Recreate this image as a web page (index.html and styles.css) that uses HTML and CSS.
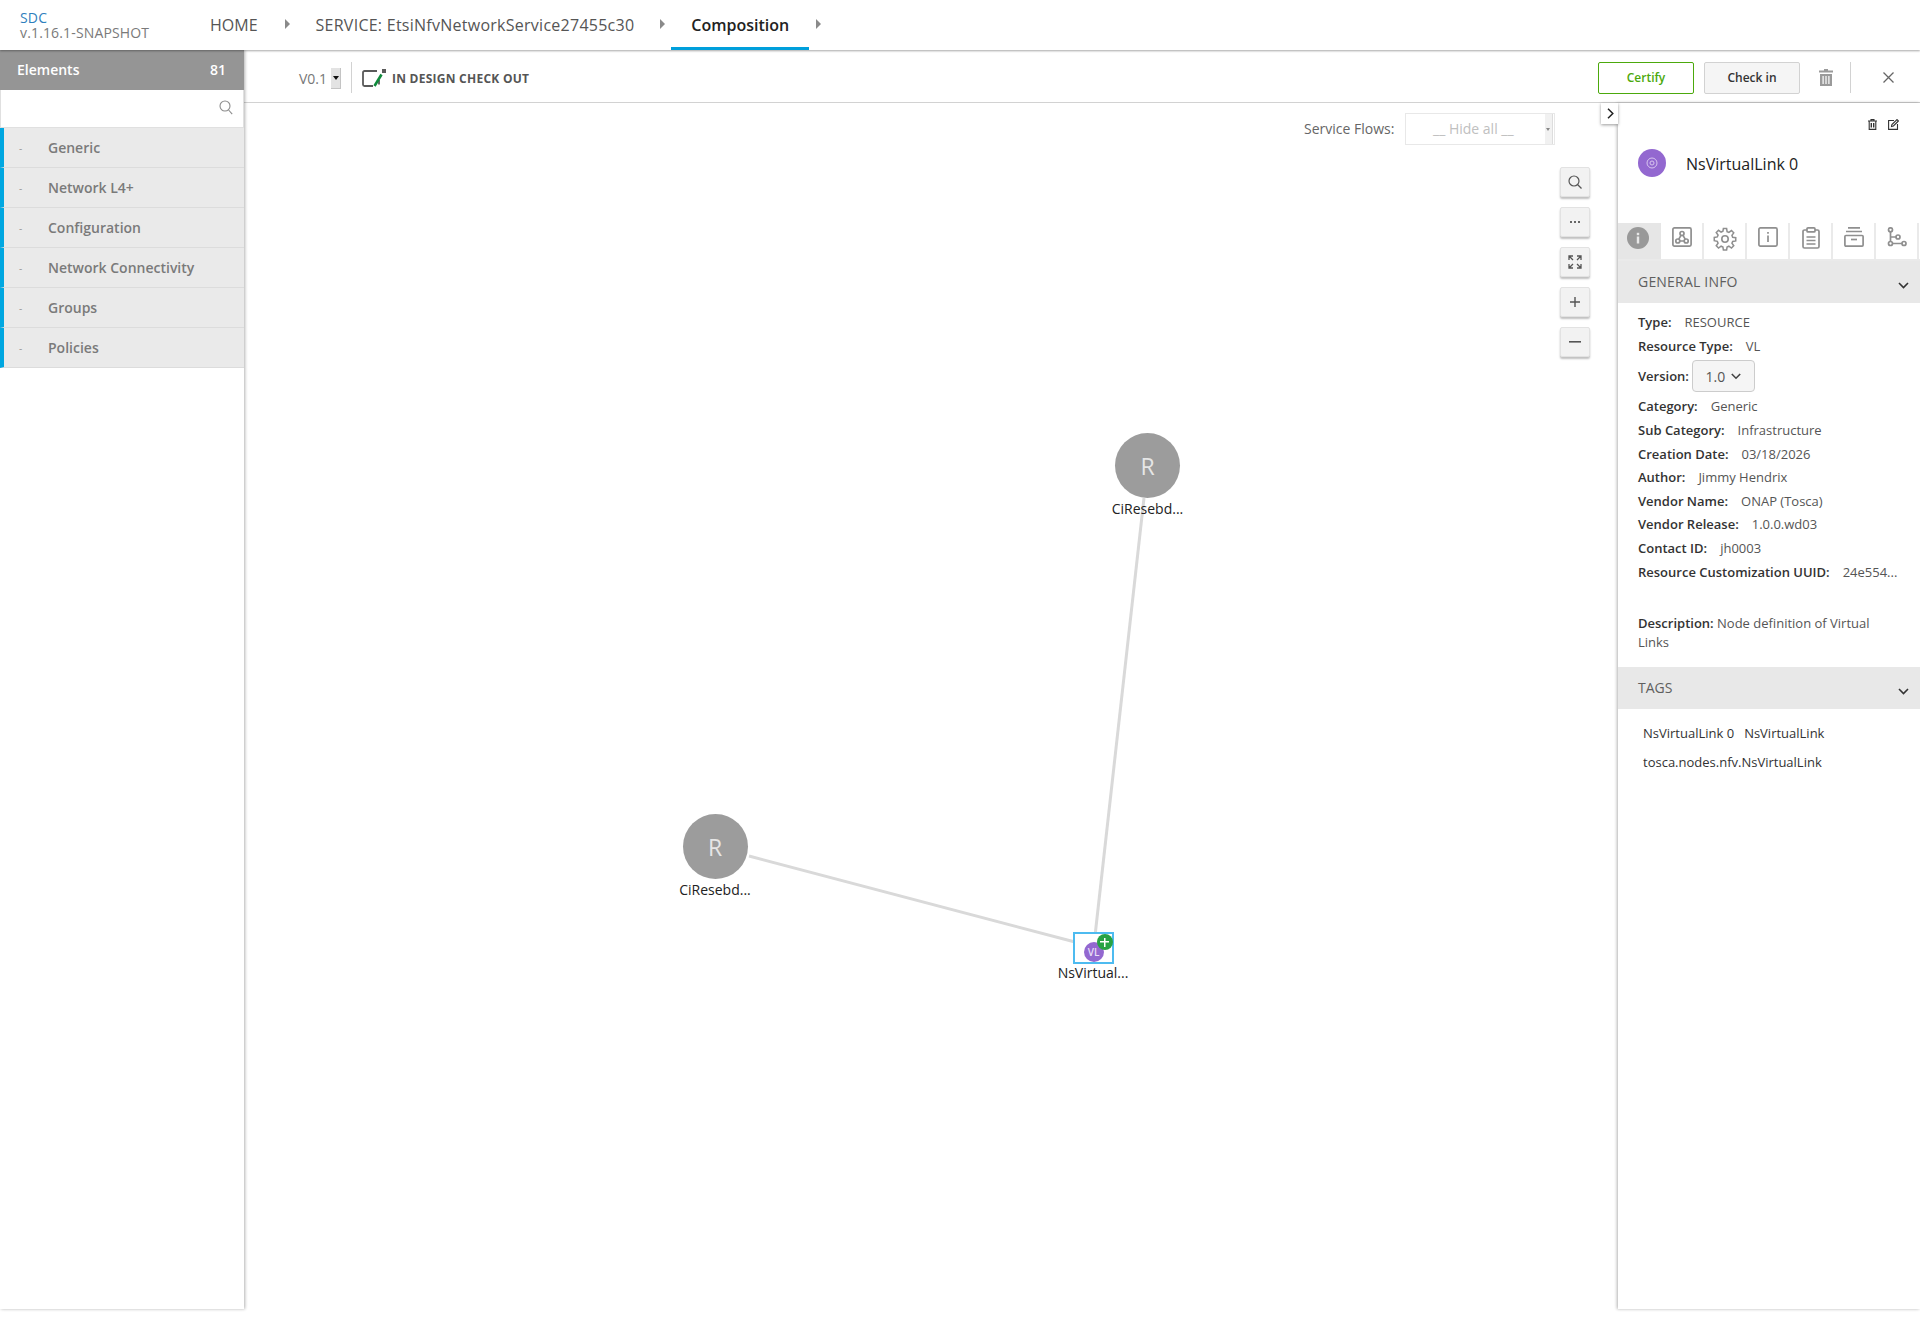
FILE: index.html
```html
<!DOCTYPE html>
<html lang="en">
<head>
  <meta charset="UTF-8">
  <title>SDC</title>
  <link rel="stylesheet" href="styles.css">
</head>
<body>
  <header class="top_nav">
    <div class="logo">
      <span class="logo_name">SDC</span>
      <span class="logo_version">v.1.16.1-SNAPSHOT</span>
    </div>
    <ul class="crumbs">
      <li class="crumb crumb_home">HOME</li>
      <li class="crumb_arrow"></li>
      <li class="crumb crumb_service">SERVICE: EtsiNfvNetworkService27455c30</li>
      <li class="crumb_arrow crumb_arrow_mid"></li>
      <li class="crumb crumb_active">Composition</li>
      <li class="crumb_arrow crumb_arrow_last"></li>
    </ul>
  </header>

  <div class="main">
    <aside class="palette">
      <div class="palette_head"><span>Elements</span><span>81</span></div>
      <div class="palette_search">
        <svg width="14" height="15" viewBox="0 0 14 15" fill="none" stroke="#8c8c8c" stroke-width="1.1"><circle cx="6" cy="6" r="5"/><path d="M9.6 10l3.6 4.2"/></svg>
      </div>
      <ul class="palette_list">
        <li><i>-</i>Generic</li>
        <li><i>-</i>Network L4+</li>
        <li><i>-</i>Configuration</li>
        <li><i>-</i>Network Connectivity</li>
        <li><i>-</i>Groups</li>
        <li><i>-</i>Policies</li>
      </ul>
    </aside>

    <div class="workspace">
      <div class="toolbar">
        <span class="version">V0.1</span>
        <span class="version_select"></span>
        <span class="toolbar_sep"></span>
        <svg class="status_icon" width="24" height="18" viewBox="0 0 24 18" fill="none">
          <path d="M15 2H2.500A1.500 1.500 0 0 0 1 3.500V15.500A1.500 1.500 0 0 0 2.500 17H11M17 11v4.500" stroke="#5a5a5a" stroke-width="1.800"/>
          <rect x="20" y="0" width="4" height="4" fill="#5a5a5a"/>
          <path d="M19.500 5.500L12.500 17" stroke="#0f8a3c" stroke-width="2.600"/>
        </svg>
        <span class="status_text">IN DESIGN CHECK OUT</span>
        <span class="toolbar_space"></span>
        <button type="button" class="btn btn_certify">Certify</button>
        <button type="button" class="btn btn_checkin">Check in</button>
        <svg class="trash_icon" width="14" height="17" viewBox="0 0 14 17" fill="#9a9a9a"><path d="M5 0h4v1.500h5V3.500H0V1.500h5z"/><path d="M1 5h12v12H1zM3.500 7v8h1.200V7zM6.400 7v8h1.200V7zM9.300 7v8h1.200V7z" fill-rule="evenodd"/></svg>
        <span class="toolbar_sep toolbar_sep_right"></span>
        <svg class="close_icon" width="11" height="11" viewBox="0 0 11 11" stroke="#666" stroke-width="1.300"><path d="M.5.500l10 10M10.500.500l-10 10"/></svg>
      </div>

      <div class="work_area">
        <div class="canvas">
          <svg class="links" width="1374" height="1207" viewBox="0 0 1374 1207" fill="none" stroke="#d9d9d9" stroke-width="3">
            <line x1="900" y1="395" x2="851" y2="833"/>
            <line x1="505" y1="753" x2="831" y2="839"/>
          </svg>

          <div class="flows">
            <span class="flows_label">Service Flows:</span>
            <div class="flows_select"><span>__ Hide all __</span><i></i></div>
          </div>

          <div class="zoom_tools">
            <button type="button" class="tool"><svg width="14" height="14" viewBox="0 0 14 14" fill="none" stroke="#555" stroke-width="1.200"><circle cx="6" cy="6" r="5"/><path d="M9.500 9.500L13.500 13.500"/></svg></button>
            <button type="button" class="tool"><svg width="10" height="2" viewBox="0 0 10 2" fill="#666"><rect width="2" height="2"/><rect x="4" width="2" height="2"/><rect x="8" width="2" height="2"/></svg></button>
            <button type="button" class="tool"><svg width="14" height="14" viewBox="0 0 14 14" fill="none" stroke="#555" stroke-width="1.300"><path d="M1 5V1h4M9 1h4v4M13 9v4H9M5 13H1V9M1.500 1.500L5 5M12.500 1.500L9 5M12.500 12.500L9 9M1.500 12.500L5 9"/></svg></button>
            <button type="button" class="tool"><svg width="12" height="12" viewBox="0 0 12 12" stroke="#555" stroke-width="1.400"><path d="M6 1v10M1 6h10"/></svg></button>
            <button type="button" class="tool"><svg width="12" height="2" viewBox="0 0 12 2" fill="#555"><rect width="12" height="1.600"/></svg></button>
          </div>

          <div class="node node_top">
            <div class="node_circle">R</div>
            <div class="node_label">CiResebd...</div>
          </div>
          <div class="node node_left">
            <div class="node_circle">R</div>
            <div class="node_label">CiResebd...</div>
          </div>
          <div class="node node_vl">
            <div class="vl_box">
              <span class="vl_circle">VL</span>
              <span class="vl_plus"></span>
            </div>
            <div class="node_label">NsVirtual...</div>
          </div>
        </div>

        <section class="panel">
          <button type="button" class="panel_toggle"><svg width="7" height="11" viewBox="0 0 7 11" fill="none" stroke="#222" stroke-width="1.500"><path d="M1 .700l4.800 4.800L1 10.300"/></svg></button>
          <div class="panel_actions">
            <svg width="9" height="11" viewBox="0 0 9 11" fill="none" stroke="#333" stroke-width="1.100"><path d="M0 2h9M3 2V.600h3V2M1.200 2v8.400h6.600V2"/><path d="M3.300 4v4.500M5.700 4v4.500" stroke-width="1.400"/></svg>
            <svg width="11" height="11" viewBox="0 0 11 11" fill="none" stroke="#333" stroke-width="1.100"><path d="M6 1.500H.600v8.900h8.900V5"/><path d="M3.500 7.500l.4-2L9 .600l1.400 1.400-5 5z"/></svg>
          </div>
          <div class="panel_title">
            <span class="avatar"><svg width="12" height="12" viewBox="0 0 12 12" fill="none" stroke="#d9c6ef" stroke-width="1"><circle cx="6" cy="6" r="5"/><circle cx="6" cy="6" r="2"/></svg></span>
            <span class="panel_name">NsVirtualLink 0</span>
          </div>

          <ul class="panel_tabs">
            <li class="tab_on"><svg width="22" height="22" viewBox="0 0 22 22"><circle cx="11" cy="11" r="11" fill="#999"/><rect x="9.800" y="9.500" width="2.400" height="7" fill="#e8e8e8"/><rect x="9.800" y="5.800" width="2.400" height="2.400" fill="#e8e8e8"/></svg></li>
            <li><svg width="20" height="20" viewBox="0 0 20 20" fill="none" stroke="#8f8f8f" stroke-width="1.700"><rect x=".9" y=".9" width="18.200" height="18.200" rx="1.500"/><circle cx="10" cy="6.500" r="2"/><circle cx="5.800" cy="14" r="2"/><circle cx="14.200" cy="14" r="2"/><path d="M9 8.300l-2.200 3.900M11 8.300l2.200 3.900M7.800 14h4.400"/></svg></li>
            <li><svg width="24" height="24" viewBox="0 0 24 24" fill="none" stroke="#8f8f8f" stroke-width="1.600"><circle cx="12" cy="12" r="3.200"/><path d="M10.300 1h3.400l.5 3.200 1.900.8 2.700-1.900 2.400 2.400-1.900 2.700.8 1.900 3.200.5v3.400l-3.200.5-.8 1.900 1.900 2.700-2.400 2.400-2.700-1.900-1.900.8-.5 3.200h-3.400l-.5-3.200-1.900-.8-2.700 1.900-2.400-2.400 1.900-2.700-.8-1.900L.7 13.700v-3.400l3.200-.5.800-1.900-1.900-2.700 2.400-2.400 2.700 1.900 1.900-.8z" transform="translate(.600 .600) scale(.95)"/></svg></li>
            <li><svg width="20" height="20" viewBox="0 0 20 20" fill="none" stroke="#8f8f8f" stroke-width="1.700"><rect x=".9" y=".9" width="18.200" height="18.200" rx="1.500"/><path d="M10 8.500v6.500M10 5v1.800"/></svg></li>
            <li><svg width="18" height="22" viewBox="0 0 18 22" fill="none" stroke="#8f8f8f" stroke-width="1.700"><path d="M5 3H2.500A1.500 1.500 0 0 0 1 4.500V19.500A1.500 1.500 0 0 0 2.500 21h13a1.500 1.500 0 0 0 1.500-1.500V4.500A1.500 1.500 0 0 0 15.500 3H13"/><rect x="5" y=".9" width="8" height="4" rx="1"/><path d="M4.500 10h9M4.500 13.500h9M4.500 17h9"/></svg></li>
            <li><svg width="20" height="20" viewBox="0 0 20 20" fill="none" stroke="#8f8f8f" stroke-width="1.700"><path d="M4 .9h12M2 4.500h16"/><rect x=".9" y="8.500" width="18.200" height="10.600" rx="1"/><path d="M7 12.500h6"/></svg></li>
            <li class="tab_last"><svg width="20" height="20" viewBox="0 0 20 20" fill="none" stroke="#8f8f8f" stroke-width="1.700"><circle cx="3.500" cy="2.800" r="2"/><circle cx="3.500" cy="16.500" r="2"/><circle cx="11" cy="10" r="2"/><circle cx="17" cy="16.500" r="2"/><path d="M3.500 4.800v9.700M5.500 16.500h9.500M3.500 10H9"/></svg></li>
          </ul>

          <h3 class="section_head"><span>GENERAL INFO</span><svg width="11" height="7" viewBox="0 0 11 7" fill="none" stroke="#333" stroke-width="1.600"><path d="M1 1l4.500 4.500L10 1"/></svg></h3>
          <div class="info">
            <p class="info_top"><b>Type:</b>RESOURCE</p>
            <p class="info_top"><b>Resource Type:</b>VL</p>
            <p class="info_version"><b>Version:</b><span class="version_btn">1.0<svg width="10" height="7" viewBox="0 0 10 7" fill="none" stroke="#444" stroke-width="1.600"><path d="M.8 1l4.200 4.200L9.200 1"/></svg></span></p>
            <p><b>Category:</b>Generic</p>
            <p><b>Sub Category:</b>Infrastructure</p>
            <p><b>Creation Date:</b>03/18/2026</p>
            <p><b>Author:</b>Jimmy Hendrix</p>
            <p><b>Vendor Name:</b>ONAP (Tosca)</p>
            <p><b>Vendor Release:</b>1.0.0.wd03</p>
            <p><b>Contact ID:</b>jh0003</p>
            <p><b>Resource Customization UUID:</b>24e554...</p>
          </div>
          <p class="description"><b>Description:</b> Node definition of Virtual Links</p>

          <h3 class="section_head section_tags"><span>TAGS</span><svg width="11" height="7" viewBox="0 0 11 7" fill="none" stroke="#333" stroke-width="1.600"><path d="M1 1l4.500 4.500L10 1"/></svg></h3>
          <div class="tags">
            <div class="tag_row"><span>NsVirtualLink 0</span><span>NsVirtualLink</span></div>
            <div class="tag_row"><span>tosca.nodes.nfv.NsVirtualLink</span></div>
          </div>
        </section>
      </div>
    </div>
  </div>
</body>
</html>
```

FILE: styles.css
```css
*{
  margin: 0;
  padding: 0;
  box-sizing: border-box;
}
html, body{
  height: 100%;
  background-color: white;
}
body{
  font-family: "Open Sans", sans-serif;
  font-size: 13px;
  color: #5a5a5a;
  overflow: hidden;
}
ul{
  list-style-type: none;
}
button{
  font-family: inherit;
}

/* top nav */
.top_nav{
  height: 50px;
  display: flex;
  position: relative;
  z-index: 3;
  background-color: white;
  box-shadow: 0px 1px 2px rgba(0, 0, 0, 0.35);
}
.logo{
  width: 210px;
  padding: 10px 0 0 20px;
  display: flex;
  flex-direction: column;
  font-size: 14px;
  line-height: 15px;
  letter-spacing: 0.15px;
}
.logo_name{
  color: #2f7fbd;
}
.logo_version{
  color: #7a7a7a;
}
.crumbs{
  display: flex;
  align-items: stretch;
}
.crumb{
  font-size: 16px;
  line-height: 50px;
  font-weight: 500;
  color: #555;
}
.crumb_service{
  margin-left: 26px;
  letter-spacing: 0.26px;
}
.crumb_active{
  margin-left: 6px;
  padding: 0 20px;
  color: #222;
  font-weight: 600;
  height: 50px;
  border-bottom: 3px solid #009fdb;
}
.crumb_arrow{
  width: 0;
  height: 0;
  margin: 19px 0 0 27px;
  border-left: 5px solid #8a8a8a;
  border-top: 5px solid transparent;
  border-bottom: 5px solid transparent;
}
.crumb_arrow_mid{
  margin-left: 26px;
}
.crumb_arrow_last{
  margin-left: 7px;
}

.main{
  display: flex;
  height: 1259px;
}

/* left palette */
.palette{
  width: 244px;
  flex-shrink: 0;
  position: relative;
  z-index: 2;
  background-color: white;
  box-shadow: 1px 0px 3px rgba(0, 0, 0, 0.3);
}
.palette_head{
  height: 40px;
  padding: 0 18px 2px 17px;
  display: flex;
  justify-content: space-between;
  align-items: center;
  background-color: #959595;
  color: white;
  font-size: 14px;
  font-weight: 600;
}
.palette_search{
  height: 38px;
  display: flex;
  justify-content: flex-end;
  align-items: center;
  padding: 0 10px 2px 0;
  border: 1px solid #e0e0e0;
  border-top: none;
}
.palette_list li{
  height: 40px;
  padding-left: 44px;
  position: relative;
  display: flex;
  align-items: center;
  background-color: #eaeaea;
  border-left: 4px solid #00a7e1;
  border-bottom: 1px solid #dcdcdc;
  font-size: 14px;
  font-weight: 600;
  color: #7a7a7a;
}
.palette_list li i{
  position: absolute;
  left: 15px;
  font-style: normal;
  font-size: 10px;
  font-weight: 400;
  color: #999;
}

/* toolbar */
.workspace{
  flex: 1;
  display: flex;
  flex-direction: column;
  min-width: 0;
}
.toolbar{
  height: 53px;
  flex-shrink: 0;
  padding: 3px 0 0 55px;
  display: flex;
  align-items: center;
  border-bottom: 1px solid #d2d2d2;
}
.version{
  margin-top: 2px;
  font-size: 14px;
  color: #777;
  width: 32px;
}
.version_select{
  width: 10px;
  height: 21px;
  margin-top: 1px;
  position: relative;
  background-color: #e3e3e3;
  border: 1px solid #c4c4c4;
  border-width: 0 1px 1px 0;
}
.version_select::after{
  content: "";
  position: absolute;
  top: 8px;
  left: 2px;
  border-top: 4px solid #111;
  border-left: 3px solid transparent;
  border-right: 3px solid transparent;
}
.toolbar_sep{
  width: 1px;
  height: 31px;
  margin-left: 10px;
  background-color: #d2d2d2;
}
.status_icon{
  margin: 0 6px 0 10px;
}
.status_text{
  margin-top: 2px;
  font-size: 12px;
  font-weight: 700;
  letter-spacing: 0.25px;
  color: #555;
}
.toolbar_space{
  flex: 1;
}
.btn{
  width: 96px;
  height: 32px;
  font-size: 12px;
  font-weight: 600;
  border-radius: 2px;
  background-color: white;
}
.btn_certify{
  border: 1px solid #4ca90c;
  color: #4ca90c;
}
.btn_checkin{
  margin-left: 10px;
  border: 1px solid #d2d2d2;
  background-color: #f5f5f5;
  color: #333;
}
.trash_icon{
  margin-left: 19px;
}
.toolbar_sep_right{
  margin-left: 17px;
}
.close_icon{
  margin: 0 26px 0 32px;
}

/* canvas */
.work_area{
  flex: 1;
  display: flex;
  min-height: 0;
}
.canvas{
  flex: 1;
  position: relative;
}
.links{
  position: absolute;
  top: 0;
  left: 0;
}
.flows{
  position: absolute;
  top: 10px;
  left: 1060px;
  display: flex;
  align-items: center;
}
.flows_label{
  width: 101px;
  padding-bottom: 2px;
  font-size: 14px;
  color: #666;
}
.flows_select{
  width: 150px;
  height: 32px;
  position: relative;
  display: flex;
  align-items: center;
  padding: 0 0 2px 27px;
  border: 1px solid #e8e8e8;
  font-size: 14px;
  color: #c0c0c0;
}
.flows_select i{
  position: absolute;
  top: 0;
  right: 1px;
  width: 8px;
  height: 30px;
  background-color: #f1f1f1;
  border-right: 1px solid #ddd;
}
.flows_select i::after{
  content: "";
  position: absolute;
  top: 14px;
  left: 1px;
  border-top: 3px solid #888;
  border-left: 2.500px solid transparent;
  border-right: 2.500px solid transparent;
}
.zoom_tools{
  position: absolute;
  top: 64px;
  left: 1316px;
  display: flex;
  flex-direction: column;
  gap: 10px;
}
.tool{
  width: 30px;
  height: 30px;
  display: flex;
  justify-content: center;
  align-items: center;
  background-color: #f2f2f2;
  border: 1px solid #e2e2e2;
  border-radius: 2px;
  box-shadow: 0px 2px 2px rgba(0, 0, 0, 0.25);
}

/* nodes sit on a free canvas */
.node{
  position: absolute;
  width: 90px;
  display: flex;
  flex-direction: column;
  align-items: center;
}
.node_top{
  left: 858.500px;
  top: 330px;
}
.node_left{
  left: 426px;
  top: 711px;
}
.node_vl{
  left: 804px;
  top: 829px;
}
.node_circle{
  width: 65px;
  height: 65px;
  border-radius: 50%;
  display: flex;
  justify-content: center;
  align-items: center;
  background-color: #9c9c9c;
  color: #e6e6e6;
  font-size: 23px;
}
.node_label{
  margin-top: 2px;
  font-size: 14px;
  line-height: 18px;
  color: #222;
  white-space: nowrap;
}
.node_vl .node_label{
  margin-top: 0;
}
.vl_box{
  width: 41px;
  height: 32px;
  position: relative;
  background-color: white;
  border: 2px solid #4dbbf0;
}
.vl_circle{
  position: absolute;
  left: 9px;
  top: 8px;
  width: 20px;
  height: 20px;
  border-radius: 50%;
  display: flex;
  justify-content: center;
  align-items: center;
  background-color: #9368d0;
  color: #e9def7;
  font-size: 10px;
  font-weight: 600;
}
.vl_plus{
  position: absolute;
  left: 22px;
  top: 0px;
  width: 16px;
  height: 16px;
  border-radius: 50%;
  background:
    linear-gradient(white, white) center / 9px 1.500px no-repeat,
    linear-gradient(white, white) center / 1.500px 9px no-repeat,
    #27a243;
}

/* right panel */
.panel{
  width: 302px;
  flex-shrink: 0;
  position: relative;
  background-color: white;
  box-shadow: -1px 0px 3px rgba(0, 0, 0, 0.3);
}
.panel_toggle{
  position: absolute;
  top: 0;
  left: -17px;
  width: 17px;
  height: 21px;
  display: flex;
  justify-content: center;
  align-items: center;
  padding-left: 2px;
  background-color: white;
  border: none;
  box-shadow: 0px 1px 3px rgba(0, 0, 0, 0.4);
}
.panel_actions{
  height: 46px;
  padding: 16px 21px 0 0;
  display: flex;
  justify-content: flex-end;
  gap: 11px;
}
.panel_title{
  height: 74px;
  padding-left: 20px;
  display: flex;
  gap: 20px;
}
.avatar{
  width: 28px;
  height: 28px;
  border-radius: 50%;
  display: flex;
  justify-content: center;
  align-items: center;
  background-color: #9368d0;
}
.panel_name{
  font-size: 16px;
  line-height: 30px;
  color: #222;
}
.panel_tabs{
  height: 38px;
  display: flex;
  border-bottom: 2px solid #eaeaea;
}
.panel_tabs li{
  width: 43px;
  height: 36px;
  display: flex;
  justify-content: center;
  padding-top: 4px;
  border-right: 2px solid #eaeaea;
}
.panel_tabs li.tab_on{
  background-color: #e6e6e6;
  border-right: none;
  padding-right: 3px;
}
.section_head{
  height: 42px;
  padding: 0 11px 0 20px;
  display: flex;
  justify-content: space-between;
  align-items: center;
  background-color: #e8e8e8;
  font-size: 14px;
  font-weight: 500;
  letter-spacing: 0.2px;
  color: #5f5f5f;
}
.section_head span{
  margin-bottom: 2px;
}
.section_head svg{
  margin-top: 7px;
}
.section_tags{
  letter-spacing: 0;
}
.info{
  padding: 7px 0 0 20px;
  height: 311px;
}
.info p{
  height: 23.600px;
  display: flex;
  align-items: center;
  font-size: 13px;
  color: #555;
  white-space: nowrap;
}
.info .info_top{
  height: 24px;
}
.info b{
  margin-right: 13px;
  font-weight: 600;
  color: #333;
}
.info .info_version{
  height: 36.700px;
}
.info .info_version b{
  margin-right: 3px;
}
.version_btn{
  width: 63px;
  height: 32px;
  display: flex;
  justify-content: center;
  align-items: center;
  gap: 6px;
  font-size: 14px;
  background-color: #f5f5f5;
  border: 1px solid #ccc;
  border-radius: 4px;
}
.description{
  width: 250px;
  margin: 0 0 15px 20px;
  font-size: 13px;
  line-height: 19px;
  color: #555;
}
.description b{
  font-weight: 600;
  color: #333;
}
.tags{
  padding: 9px 0 0 25px;
  font-size: 13px;
  color: #333;
}
.tag_row{
  height: 29px;
  display: flex;
  align-items: center;
  gap: 10px;
}
```
